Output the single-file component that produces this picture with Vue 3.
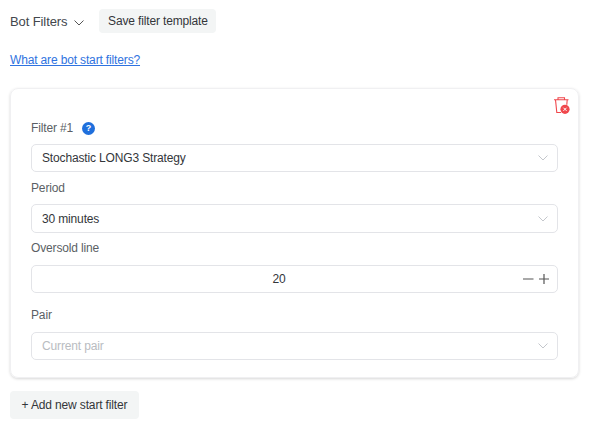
<template>
  <div class="page">
    <div class="head">
      <div class="title">
        <span>Bot Filters</span>
        <svg class="title-chevron" width="10" height="6" viewBox="0 0 10 6"><path d="M.5.5L5 5 9.500.5" fill="none" stroke="#555" stroke-width="1" /></svg>
      </div>
      <button class="btn save">Save filter template</button>
    </div>
    <a class="help-link" href="#">What are bot start filters?</a>

    <div class="card">
      <div class="card-top">
        <svg class="trash" width="18" height="18" viewBox="0 0 18 18">
          <path d="M2 2.800h14.500M6 2.800V.8h6.500v2M3.500 2.800l1.300 12.700h4.200M15.200 2.800l-.4 5" fill="none" stroke="#f0474c" stroke-width="1.100" />
          <circle cx="13" cy="12.300" r="4.600" fill="#f0474c" />
          <path d="M11.400 10.700l3.200 3.200M14.600 10.700l-3.200 3.200" stroke="#fff" stroke-width="1" />
        </svg>
      </div>
      <div class="label filter-label">
        <span>Filter #1</span>
        <span class="hint">?</span>
      </div>
      <div class="field">
        <span>Stochastic LONG3 Strategy</span>
        <svg width="10" height="6" viewBox="0 0 10 6"><path d="M.5.5L5 5 9.500.5" fill="none" stroke="#c4c7cc" stroke-width="1" /></svg>
      </div>
      <div class="label period-label">Period</div>
      <div class="field tall">
        <span>30 minutes</span>
        <svg width="10" height="6" viewBox="0 0 10 6"><path d="M.5.5L5 5 9.500.5" fill="none" stroke="#c4c7cc" stroke-width="1" /></svg>
      </div>
      <div class="label oversold-label">Oversold line</div>
      <div class="field number">
        <span class="value">20</span>
        <svg width="26" height="10" viewBox="0 0 26 10">
          <path d="M0 5h10.500M16 5h10M21 0v10" fill="none" stroke="#555" stroke-width="1.200" />
        </svg>
      </div>
      <div class="label pair-label">Pair</div>
      <div class="field">
        <span class="placeholder">Current pair</span>
        <svg width="10" height="6" viewBox="0 0 10 6"><path d="M.5.5L5 5 9.500.5" fill="none" stroke="#c4c7cc" stroke-width="1" /></svg>
      </div>
    </div>

    <button class="btn add">+ Add new start filter</button>
  </div>
</template>

<script setup>
</script>

<style>
html, body {
  margin: 0;
  background: #fff;
}
</style>

<style scoped>
.page {
  width: 597px;
  height: 440px;
  padding: 9px 18px 0 10px;
  box-sizing: border-box;
  font-family: "Liberation Sans", Arial, sans-serif;
  font-size: 12px;
  letter-spacing: -0.15px;
  color: #33363a;
  overflow: hidden;
}

.head {
  display: flex;
  align-items: center;
  gap: 15px;
  height: 24px;
}

.title {
  display: flex;
  align-items: center;
  gap: 7px;
  font-size: 13px;
  letter-spacing: -0.1px;
  color: #43474d;
}

.title-chevron {
  margin-top: 3px;
}

.btn {
  display: block;
  border: 0;
  border-radius: 4px;
  background: #f3f5f5;
  font: inherit;
  letter-spacing: inherit;
  color: #33363a;
  padding: 0;
}

.save {
  width: 117px;
  height: 24px;
}

.help-link {
  display: block;
  width: max-content;
  margin-top: 20px;
  line-height: 14px;
  color: #2f73e0;
}

.card {
  margin-top: 21px;
  height: 290px;
  box-sizing: border-box;
  padding: 0 20px;
  border: 1px solid #f0f0f2;
  border-radius: 8px;
  box-shadow: 0 1px 3px rgba(0, 0, 0, 0.16);
}

.card-top {
  display: flex;
  justify-content: flex-end;
  height: 30px;
  padding: 8px 8px 0 0;
  margin-right: -20px;
  box-sizing: border-box;
}

.label {
  color: #5b5f65;
  line-height: 14px;
}

.filter-label {
  display: flex;
  align-items: center;
  gap: 9px;
  margin-top: 2px;
  margin-bottom: 9px;
}

.period-label {
  margin-top: 9px;
  margin-bottom: 9px;
}

.oversold-label {
  margin-top: 8px;
  margin-bottom: 10px;
}

.pair-label {
  margin-top: 15px;
  margin-bottom: 10px;
}

.hint {
  width: 13px;
  height: 13px;
  border-radius: 50%;
  background: #1f6fdc;
  color: #fff;
  font-size: 9px;
  font-weight: bold;
  line-height: 13px;
  text-align: center;
}

.field {
  display: flex;
  align-items: center;
  justify-content: space-between;
  height: 28px;
  box-sizing: border-box;
  padding: 0 9px 0 10px;
  border: 1px solid #e3e4e8;
  border-radius: 5px;
}

.tall {
  height: 29px;
}

.number {
  gap: 7px;
  padding-right: 8px;
}

.value {
  flex: 1;
  text-align: center;
}

.placeholder {
  color: #b9bcc1;
}

.add {
  width: 129px;
  height: 28px;
  margin-top: 13px;
}
</style>
